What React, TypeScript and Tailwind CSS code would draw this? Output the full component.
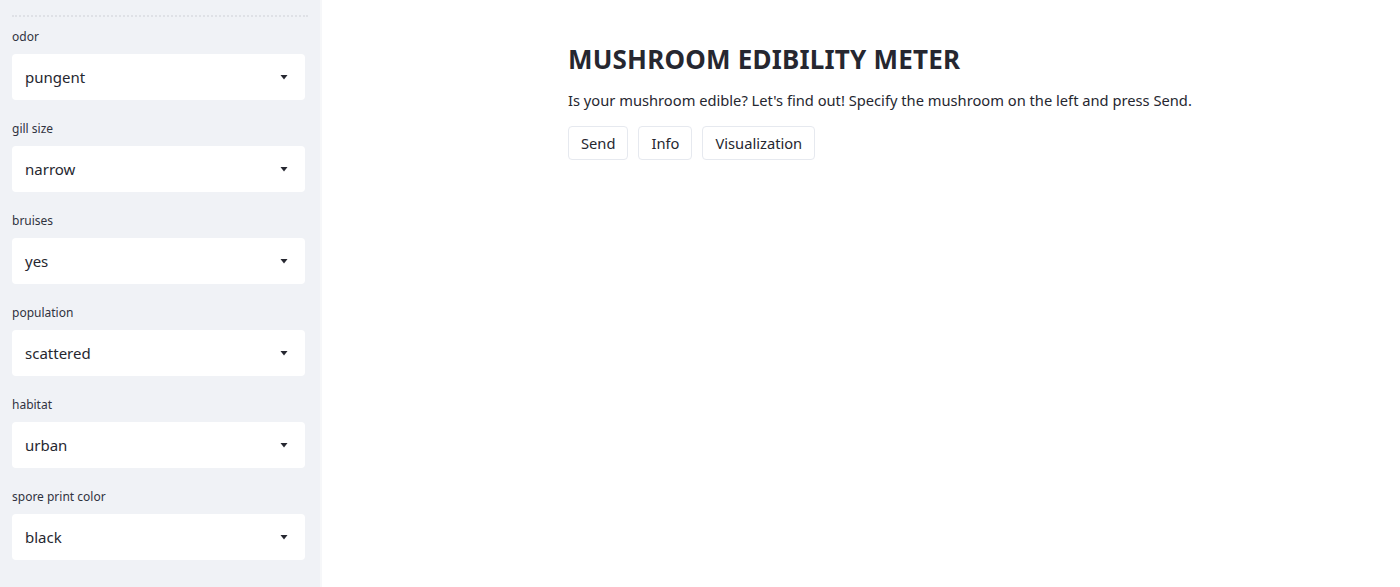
import React from 'react'

const fields = [
  { label: 'odor', value: 'pungent' },
  { label: 'gill size', value: 'narrow' },
  { label: 'bruises', value: 'yes' },
  { label: 'population', value: 'scattered' },
  { label: 'habitat', value: 'urban' },
  { label: 'spore print color', value: 'black' },
]

const Caret = () => (
  <svg width="8" height="5" viewBox="0 0 8 5" className="text-[#262730]">
    <path d="M0.5 0h7L4 4.5z" fill="currentColor" />
  </svg>
)

const App = () => {
  return (
    <div className="flex h-[587px] w-full overflow-hidden bg-white font-['Noto_Sans','Open_Sans',sans-serif] text-[#262730]">
      <aside className="w-[322px] shrink-0 border-r-2 border-[#f6f7f9] bg-[#f0f2f6] px-3">
        <div className="mt-[15px] border-t-2 border-dotted border-[#dfe1e6]" />
        <div className="mt-[11px] flex flex-col gap-5">
          {fields.map((f) => (
            <div key={f.label} className="flex flex-col">
              <label className="mb-[9px] h-[17px] text-[12px] leading-[17px] text-[#31333f]">{f.label}</label>
              <div className="flex h-[46px] w-[293px] items-center justify-between rounded bg-white pl-[13px] pr-[17px]">
                <span className="text-[15px]">{f.value}</span>
                <Caret />
              </div>
            </div>
          ))}
        </div>
      </aside>

      <main className="flex-1 pl-[246px] pt-[42px]">
        <h1 className="text-[26px] font-bold leading-[34px] tracking-[0.2px] text-[#262730]">
          MUSHROOM EDIBILITY METER
        </h1>
        <p className="mt-[13px] text-[14.7px] leading-[22px] text-[#262730]">
          Is your mushroom edible? Let's find out! Specify the mushroom on the left and press Send.
        </p>
        <div className="mt-[15px] flex gap-[10px]">
          {['Send', 'Info', 'Visualization'].map((b) => (
            <button
              key={b}
              className="h-[34px] rounded border border-[#e6e9ef] bg-white px-[12px] text-[14.7px] text-[#262730]"
            >
              {b}
            </button>
          ))}
        </div>
      </main>
    </div>
  )
}

export default App
